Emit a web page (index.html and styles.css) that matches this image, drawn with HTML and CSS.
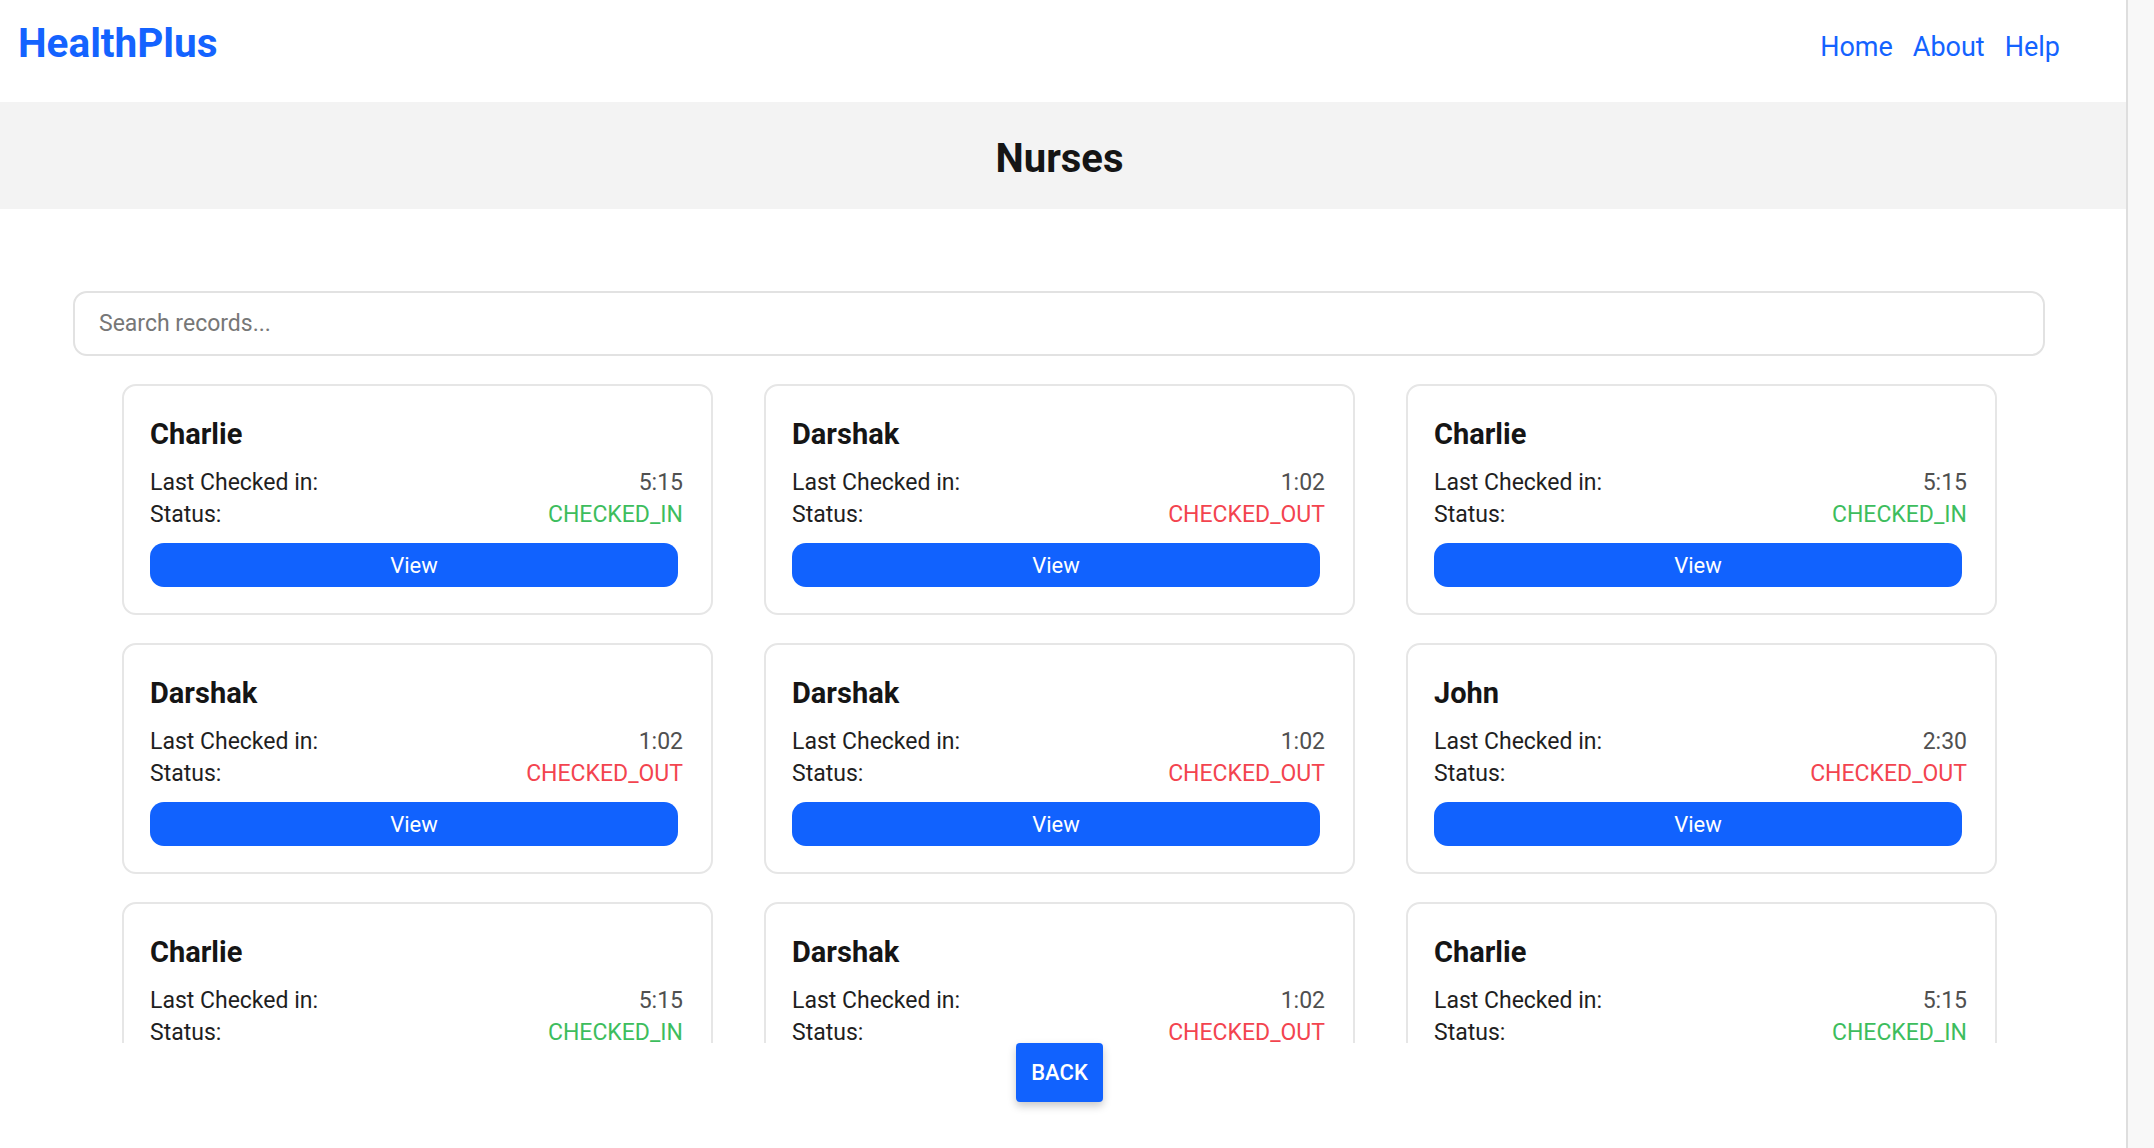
FILE: index.html
```html
<!DOCTYPE html>
<html lang="en">
<head>
<meta charset="utf-8">
<title>HealthPlus - Nurses</title>
<link rel="stylesheet" href="styles.css">
</head>
<body>
<div class="page">
  <header class="topbar">
    <a class="brand" href="#">HealthPlus</a>
    <nav class="nav">
      <a href="#">Home</a>
      <a href="#">About</a>
      <a href="#">Help</a>
    </nav>
  </header>
  <section class="title-band">
    <h1>Nurses</h1>
  </section>
  <div class="search-wrap">
    <input class="search" type="text" placeholder="Search records...">
  </div>
  <div class="list">
    <div class="grid">
      <div class="card">
        <h3>Charlie</h3>
        <div class="row"><span class="label">Last Checked in:</span><span class="value">5:15</span></div>
        <div class="row"><span class="label">Status:</span><span class="status in">CHECKED_IN</span></div>
        <button class="view">View</button>
      </div>
      <div class="card">
        <h3>Darshak</h3>
        <div class="row"><span class="label">Last Checked in:</span><span class="value">1:02</span></div>
        <div class="row"><span class="label">Status:</span><span class="status out">CHECKED_OUT</span></div>
        <button class="view">View</button>
      </div>
      <div class="card">
        <h3>Charlie</h3>
        <div class="row"><span class="label">Last Checked in:</span><span class="value">5:15</span></div>
        <div class="row"><span class="label">Status:</span><span class="status in">CHECKED_IN</span></div>
        <button class="view">View</button>
      </div>
      <div class="card">
        <h3>Darshak</h3>
        <div class="row"><span class="label">Last Checked in:</span><span class="value">1:02</span></div>
        <div class="row"><span class="label">Status:</span><span class="status out">CHECKED_OUT</span></div>
        <button class="view">View</button>
      </div>
      <div class="card">
        <h3>Darshak</h3>
        <div class="row"><span class="label">Last Checked in:</span><span class="value">1:02</span></div>
        <div class="row"><span class="label">Status:</span><span class="status out">CHECKED_OUT</span></div>
        <button class="view">View</button>
      </div>
      <div class="card">
        <h3>John</h3>
        <div class="row"><span class="label">Last Checked in:</span><span class="value">2:30</span></div>
        <div class="row"><span class="label">Status:</span><span class="status out">CHECKED_OUT</span></div>
        <button class="view">View</button>
      </div>
      <div class="card">
        <h3>Charlie</h3>
        <div class="row"><span class="label">Last Checked in:</span><span class="value">5:15</span></div>
        <div class="row"><span class="label">Status:</span><span class="status in">CHECKED_IN</span></div>
        <button class="view">View</button>
      </div>
      <div class="card">
        <h3>Darshak</h3>
        <div class="row"><span class="label">Last Checked in:</span><span class="value">1:02</span></div>
        <div class="row"><span class="label">Status:</span><span class="status out">CHECKED_OUT</span></div>
        <button class="view">View</button>
      </div>
      <div class="card">
        <h3>Charlie</h3>
        <div class="row"><span class="label">Last Checked in:</span><span class="value">5:15</span></div>
        <div class="row"><span class="label">Status:</span><span class="status in">CHECKED_IN</span></div>
        <button class="view">View</button>
      </div>
    </div>
  </div>
  <div class="footer">
    <button class="back">BACK</button>
  </div>
</div>
<div class="scroll-track"></div>
</body>
</html>
```

FILE: styles.css
```css
* {
  box-sizing: border-box;
}

html, body {
  margin: 0;
  height: 100%;
}

body {
  display: flex;
  font-family: Roboto, "Liberation Sans", Arial, sans-serif;
  background: #ffffff;
  color: #1f1f1f;
  overflow: hidden;
}

.page {
  width: 2126px;
  height: 1148px;
  display: flex;
  flex-direction: column;
}

.scroll-track {
  flex: 1;
  background: #f8f8f8;
  border-left: 2px solid #dedede;
}

/* Header */
.topbar {
  height: 102px;
  padding: 0 66px 15px 18px;
  display: flex;
  align-items: center;
  justify-content: space-between;
}

.brand {
  font-size: 40.5px;
  font-weight: 700;
  line-height: 49px;
  color: #1463ff;
  text-decoration: none;
}

.nav {
  display: flex;
  gap: 20px;
  margin-top: 6px;
}

.nav a {
  font-size: 27px;
  line-height: 34px;
  color: #1463ff;
  text-decoration: none;
}

/* Title band */
.title-band {
  height: 107px;
  background: #f3f3f3;
  padding: 33px 129px 0 122px;
}

.title-band h1 {
  margin: 0;
  text-align: center;
  font-size: 40px;
  line-height: 47px;
  font-weight: 700;
  color: #151515;
}

/* Search */
.search-wrap {
  padding: 82px 81px 0 73px;
}

.search {
  display: block;
  width: 100%;
  height: 65px;
  border: 2px solid #e2e2e2;
  border-radius: 14px;
  padding: 0 24px;
  font-family: Roboto, "Liberation Sans", Arial, sans-serif;
  font-size: 23px;
  color: #222;
  background: #fff;
  outline: none;
}

.search::placeholder {
  color: #777777;
}

/* List */
.list {
  height: 687px;
  padding: 28px 129px 0 122px;
  overflow-y: auto;
  scrollbar-width: none;
}

.grid {
  display: grid;
  grid-template-columns: repeat(3, 1fr);
  column-gap: 51px;
  row-gap: 28px;
}

.card {
  border: 2px solid #e6e6e6;
  border-radius: 14px;
  padding: 31px 28px 26px 26px;
  background: #fff;
}

.card h3 {
  margin: 0 0 16px;
  font-size: 29px;
  line-height: 34px;
  font-weight: 700;
  color: #151515;
}

.row {
  display: flex;
  justify-content: space-between;
  font-size: 23px;
  line-height: 32px;
}

.label {
  color: #1f1f1f;
}

.value {
  color: #505050;
}

.status.in {
  color: #3dbd5d;
}

.status.out {
  color: #f3444f;
}

.view {
  display: flex;
  align-items: center;
  justify-content: center;
  width: calc(100% - 5px);
  height: 44px;
  margin-top: 12px;
  border: none;
  border-radius: 14px;
  background: #1162fe;
  color: #fff;
  font-family: Roboto, "Liberation Sans", Arial, sans-serif;
  font-size: 22px;
}

/* Footer */
.footer {
  display: flex;
  justify-content: center;
  padding: 0 129px 0 122px;
}

.back {
  width: 87px;
  height: 59px;
  border: none;
  border-radius: 4px;
  background: #1162fe;
  color: #fff;
  font-family: Roboto, "Liberation Sans", Arial, sans-serif;
  font-size: 22px;
  font-weight: 500;
  box-shadow: 0 4px 8px rgba(0, 0, 0, 0.22);
  padding: 0;
}
```
